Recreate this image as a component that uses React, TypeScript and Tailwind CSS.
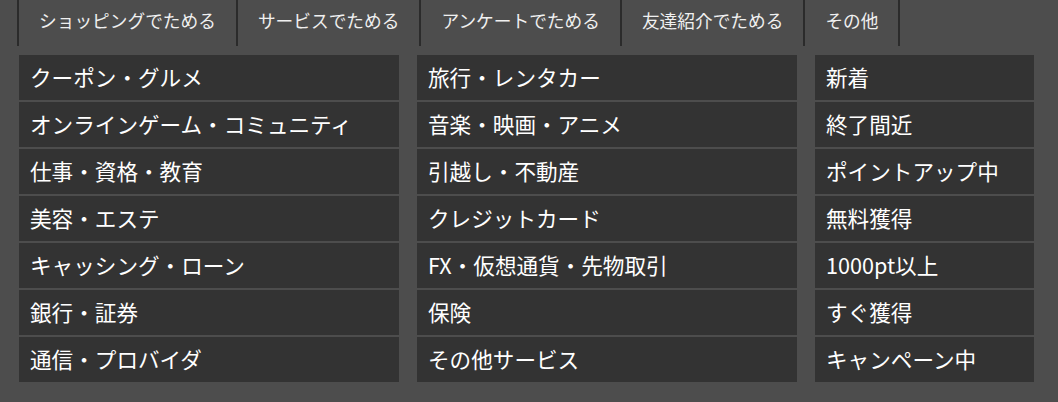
const tabs = ["ショッピングでためる", "サービスでためる", "アンケートでためる", "友達紹介でためる", "その他"]

const col1 = ["クーポン・グルメ", "オンラインゲーム・コミュニティ", "仕事・資格・教育", "美容・エステ", "キャッシング・ローン", "銀行・証券", "通信・プロバイダ"]
const col2 = ["旅行・レンタカー", "音楽・映画・アニメ", "引越し・不動産", "クレジットカード", "FX・仮想通貨・先物取引", "保険", "その他サービス"]
const col3 = ["新着", "終了間近", "ポイントアップ中", "無料獲得", "1000pt以上", "すぐ獲得", "キャンペーン中"]

type ColumnProps = {
    items: string[]
    width: string
}

const Column = ({ items, width }: ColumnProps) => {
    return (
        <ul className={`flex flex-col gap-[2px] ${width}`}>
            {items.map((item) => (
                <li key={item} className="flex h-[45px] items-center bg-[#333333] pl-[11px] text-[21.6px] text-white">
                    <a href="#">{item}</a>
                </li>
            ))}
        </ul>
    )
}

const App = () => {
    return (
        <div className="h-[402px] w-[1058px] bg-[#4d4d4d]" style={{ fontFamily: '"Noto Sans CJK JP", "Noto Sans", sans-serif' }}>
            <nav className="ml-[17px] flex h-[46px]">
                {tabs.map((tab, i) => (
                    <div
                        key={tab}
                        className={`h-full border-r-2 border-[#2b2b2b] px-5 pt-[7px] text-[17.7px] leading-[26px] text-[#f0f0f0] ${i === 0 ? "border-l-2" : ""}`}
                    >
                        {tab}
                    </div>
                ))}
            </nav>

            <div className="ml-[19px] mt-[9px] flex gap-[18px]">
                <Column items={col1} width="w-[380px]" />
                <Column items={col2} width="w-[380px]" />
                <Column items={col3} width="w-[219px]" />
            </div>
        </div>
    )
}

export default App
